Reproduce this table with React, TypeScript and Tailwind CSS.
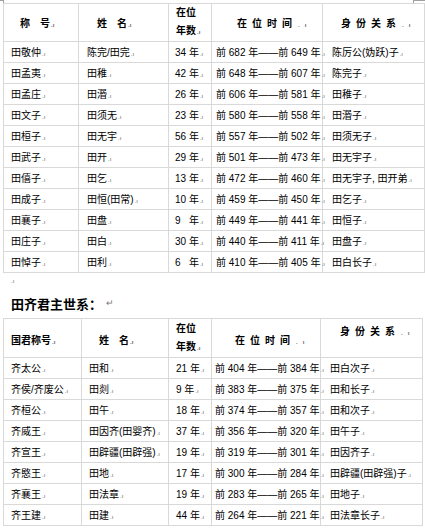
import React from "react";

const FONT = { fontFamily: '"Liberation Sans", "Noto Sans CJK SC", sans-serif' };

function Mark() {
  return <span className="text-[6px] text-[#666] ml-[1px] align-baseline">.ı</span>;
}

type Row = [string, string, string, string, string];

const t1: Row[] = [
  ["田敬仲", "陈完/田完", "34 年", "前 682 年——前 649 年", "陈厉公(妫跃)子"],
  ["田孟夷", "田稚", "42 年", "前 648 年——前 607 年", "陈完子"],
  ["田孟庄", "田湣", "26 年", "前 606 年——前 581 年", "田稚子"],
  ["田文子", "田须无", "23 年", "前 580 年——前 558 年", "田湣子"],
  ["田桓子", "田无宇", "56 年", "前 557 年——前 502 年", "田须无子"],
  ["田武子", "田开", "29 年", "前 501 年——前 473 年", "田无宇子"],
  ["田僖子", "田乞", "13 年", "前 472 年——前 460 年", "田无宇子, 田开弟"],
  ["田成子", "田恒(田常)", "10 年", "前 459 年——前 450 年", "田乞子"],
  ["田襄子", "田盘", "9   年", "前 449 年——前 441 年", "田恒子"],
  ["田庄子", "田白", "30 年", "前 440 年——前 411 年", "田盘子"],
  ["田悼子", "田利", "6   年", "前 410 年——前 405 年", "田白长子"],
];

const t2: Row[] = [
  ["齐太公", "田和", "21 年", "前 404 年——前 384 年", "田白次子"],
  ["齐侯/齐废公", "田剡", "9 年", "前 383 年——前 375 年", "田和长子"],
  ["齐桓公", "田午", "18 年", "前 374 年——前 357 年", "田和次子"],
  ["齐威王", "田因齐(田婴齐)", "37 年", "前 356 年——前 320 年", "田午子"],
  ["齐宣王", "田辟疆(田辟强)", "19 年", "前 319 年——前 301 年", "田因齐子"],
  ["齐愍王", "田地", "17 年", "前 300 年——前 284 年", "田辟疆(田辟强)子"],
  ["齐襄王", "田法章", "19 年", "前 283 年——前 265 年", "田地子"],
  ["齐王建", "田建", "44 年", "前 264 年——前 221 年", "田法章长子"],
];

const cell = "border border-[#d9d9d9] whitespace-pre text-[10px] leading-[12px] text-black";

export default function App() {
  return (
    <div className="relative bg-white w-[425px] h-[528px] overflow-hidden" style={FONT}>
      {/* word table handles */}
      <div className="absolute left-0 top-0 w-[4px] h-[3px] border-t border-r border-[#a0a0a0]" />
      <div className="absolute left-[413px] top-0 w-[12px] h-[3px] border-t border-l border-[#a0a0a0]" />

      <div className="pt-[3px] pl-[3px]">
        <table className="table-fixed border-collapse w-[421px]">
          <colgroup>
            <col className="w-[75px]" />
            <col className="w-[90px]" />
            <col className="w-[43px]" />
            <col className="w-[111px]" />
            <col className="w-[102px]" />
          </colgroup>
          <tbody>
            <tr className="h-[38px]">
              <td className={`${cell} font-bold pl-[16px] pt-[3px] align-middle`}>称　号<Mark /></td>
              <td className={`${cell} font-bold pl-[18px] pt-[3px] align-middle`}>姓　名<Mark /></td>
              <td className={`${cell} font-bold pl-[7px] align-middle leading-[18px]`}>
                在位<br />年数<Mark />
              </td>
              <td className={`${cell} font-bold pl-[25px] pt-[3px] align-middle tracking-[5px]`}>在位时间<Mark /></td>
              <td className={`${cell} font-bold pl-[18px] pt-[3px] align-middle tracking-[5px]`}>身份关系<Mark /></td>
            </tr>
            {t1.map((r, i) => (
              <tr key={i} className="h-[21px]">
                <td className={`${cell} pl-[7px] pt-[2px]`}>{r[0]}<Mark /></td>
                <td className={`${cell} pl-[8px] pt-[2px]`}>{r[1]}<Mark /></td>
                <td className={`${cell} pl-[6px] pt-[2px]`}>{r[2]}<Mark /></td>
                <td className={`${cell} pl-[4px] pt-[2px]`}>{r[3]}<Mark /></td>
                <td className={`${cell} pl-[9px] pt-[2px]`}>{r[4]}<Mark /></td>
              </tr>
            ))}
          </tbody>
        </table>

        <div className="h-[17px] pl-[8px] flex items-center">
          <span className="text-[6px] text-[#666]">.ı</span>
        </div>
        <div className="h-[28px] pl-[8px] flex items-center">
          <span className="text-[13px] font-bold text-black" style={{ fontFamily: '"Noto Sans CJK SC", sans-serif' }}>
            田齐君主世系：
          </span>
          <span className="text-[9px] text-[#777] ml-[4px]">↵</span>
        </div>

        <table className="table-fixed border-collapse w-[419px]">
          <colgroup>
            <col className="w-[78px]" />
            <col className="w-[87px]" />
            <col className="w-[43px]" />
            <col className="w-[109px]" />
            <col className="w-[102px]" />
          </colgroup>
          <tbody>
            <tr className="h-[39px]">
              <td className={`${cell} font-bold pl-[7px] pt-[6px] align-middle`}>国君称号<Mark /></td>
              <td className={`${cell} font-bold pl-[17px] pt-[6px] align-middle`}>姓　名<Mark /></td>
              <td className={`${cell} font-bold pl-[7px] align-middle leading-[18px]`}>
                在位<br />年数<Mark />
              </td>
              <td className={`${cell} font-bold pl-[23px] pt-[6px] align-middle tracking-[5px]`}>在位时间<Mark /></td>
              <td className={`${cell} font-bold pl-[19px] pt-[7px] align-top tracking-[5px]`}>身份关系<Mark /></td>
            </tr>
            {t2.map((r, i) => (
              <tr key={i} className="h-[21px]">
                <td className={`${cell} pl-[7px] pt-[2px]`}>{r[0]}<Mark /></td>
                <td className={`${cell} pl-[7px] pt-[2px]`}>{r[1]}<Mark /></td>
                <td className={`${cell} pl-[7px] pt-[2px]`}>{r[2]}<Mark /></td>
                <td className={`${cell} pl-[3px] pt-[2px]`}>{r[3]}<Mark /></td>
                <td className={`${cell} pl-[9px] pt-[2px]`}>{r[4]}<Mark /></td>
              </tr>
            ))}
          </tbody>
        </table>
      </div>
    </div>
  );
}
